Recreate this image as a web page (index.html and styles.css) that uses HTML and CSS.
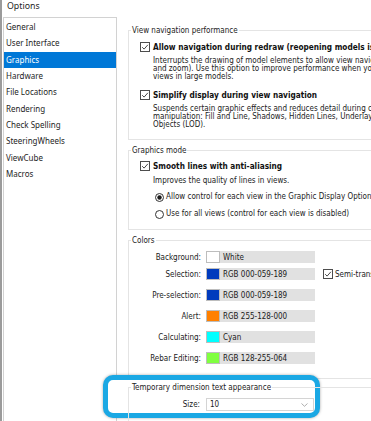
FILE: index.html
```html
<!DOCTYPE html>
<html>
<head>
<meta charset="utf-8">
<title>Options</title>
<link rel="stylesheet" href="styles.css">
</head>
<body>
<div class="window">
  <div class="title">Options</div>
  <div class="main">
    <ul class="nav">
      <li>General</li>
      <li>User Interface</li>
      <li class="sel">Graphics</li>
      <li>Hardware</li>
      <li>File Locations</li>
      <li>Rendering</li>
      <li>Check Spelling</li>
      <li>SteeringWheels</li>
      <li>ViewCube</li>
      <li>Macros</li>
    </ul>
    <div class="content">
      <section class="group g-nav">
        <div class="legend">View navigation performance</div>
        <div class="check-row first">
          <svg class="cb" width="10" height="10" viewBox="0 0 10 10"><rect x="0.5" y="0.5" width="9" height="9" fill="#fff" stroke="#4d4d4d"/><path d="M2.2 5.2 L4.1 7.1 L7.9 2.8" fill="none" stroke="#333" stroke-width="0.9"/></svg>
          <b>Allow navigation during redraw (reopening models is required)</b>
        </div>
        <p class="desc">Interrupts the drawing of model elements to allow view navigation (pan, orbit,<br>and zoom). Use this option to improve performance when you navigate<br>views in large models.</p>
        <div class="check-row second">
          <svg class="cb" width="10" height="10" viewBox="0 0 10 10"><rect x="0.5" y="0.5" width="9" height="9" fill="#fff" stroke="#4d4d4d"/><path d="M2.2 5.2 L4.1 7.1 L7.9 2.8" fill="none" stroke="#333" stroke-width="0.9"/></svg>
          <b>Simplify display during view navigation</b>
        </div>
        <p class="desc">Suspends certain graphic effects and reduces detail during camera<br>manipulation: Fill and Line, Shadows, Hidden Lines, Underlay, and Small<br>Objects (LOD).</p>
      </section>

      <section class="group g-mode">
        <div class="legend">Graphics mode</div>
        <div class="check-row first">
          <svg class="cb" width="10" height="10" viewBox="0 0 10 10"><rect x="0.5" y="0.5" width="9" height="9" fill="#fff" stroke="#4d4d4d"/><path d="M2.2 5.2 L4.1 7.1 L7.9 2.8" fill="none" stroke="#333" stroke-width="0.9"/></svg>
          <b>Smooth lines with anti-aliasing</b>
        </div>
        <p class="desc single">Improves the quality of lines in views.</p>
        <div class="radio-row first">
          <svg class="rb" width="9" height="9" viewBox="0 0 9 9"><circle cx="4.5" cy="4.5" r="4" fill="#fff" stroke="#333"/><circle cx="4.5" cy="4.5" r="2.2" fill="#1a1a1a"/></svg>
          <span>Allow control for each view in the Graphic Display Options dialog</span>
        </div>
        <div class="radio-row">
          <svg class="rb" width="9" height="9" viewBox="0 0 9 9"><circle cx="4.5" cy="4.5" r="4" fill="#fff" stroke="#333"/></svg>
          <span>Use for all views (control for each view is disabled)</span>
        </div>
      </section>

      <section class="group g-colors">
        <div class="legend">Colors</div>
        <div class="color-row r-bg">
          <span class="lbl">Background:</span>
          <span class="field"><span class="swatch" style="background:#ffffff"></span><span class="val">White</span></span>
        </div>
        <div class="color-row r-sel">
          <span class="lbl">Selection:</span>
          <span class="field"><span class="swatch" style="background:#003bbd"></span><span class="val">RGB 000-059-189</span></span>
          <span class="semi">
            <svg class="cb" width="10" height="10" viewBox="0 0 10 10"><rect x="0.5" y="0.5" width="9" height="9" fill="#fff" stroke="#4d4d4d"/><path d="M2.2 5.2 L4.1 7.1 L7.9 2.8" fill="none" stroke="#333" stroke-width="0.9"/></svg>
            <span>Semi-transparent</span>
          </span>
        </div>
        <div class="color-row">
          <span class="lbl">Pre-selection:</span>
          <span class="field"><span class="swatch" style="background:#003bbd"></span><span class="val">RGB 000-059-189</span></span>
        </div>
        <div class="color-row">
          <span class="lbl">Alert:</span>
          <span class="field"><span class="swatch" style="background:#ff8000"></span><span class="val">RGB 255-128-000</span></span>
        </div>
        <div class="color-row">
          <span class="lbl">Calculating:</span>
          <span class="field"><span class="swatch" style="background:#00ffff"></span><span class="val">Cyan</span></span>
        </div>
        <div class="color-row">
          <span class="lbl">Rebar Editing:</span>
          <span class="field"><span class="swatch" style="background:#80ff40"></span><span class="val">RGB 128-255-064</span></span>
        </div>
      </section>

      <section class="group g-temp">
        <div class="legend">Temporary dimension text appearance</div>
        <div class="size-row">
          <span class="lbl">Size:</span>
          <span class="select"><span class="val">10</span>
            <svg class="chev" width="7" height="4" viewBox="0 0 7 4"><path d="M0.5 0.5 L3.5 3.3 L6.5 0.5" fill="none" stroke="#9a9a9a" stroke-width="0.8"/></svg>
          </span>
        </div>
      </section>
    </div>
  </div>
  <div class="highlight"></div>
</div>
</body>
</html>
```

FILE: styles.css
```css
* { box-sizing: border-box; }
html, body { margin: 0; padding: 0; background: #fff; }

.window {
  position: relative;
  width: 371px;
  height: 421px;
  overflow: hidden;
  background: #fff;
  border-left: 2px solid #9b9b9b;
  color: #1a1a1a;
}

.title {
  height: 17px;
  padding-left: 5px;
  font-family: "Noto Sans", "Open Sans", sans-serif;
  font-size: 8.8px;
  line-height: 12px;
  color: #1e1e1e;
}

.main {
  display: flex;
  align-items: flex-start;
}

.nav {
  list-style: none;
  margin: 0 0 0 1px;
  padding: 1px 0 0 0;
  width: 114px;
  height: 420px;
  flex: none;
  border: 1px solid #d2d2d2;
  font-family: "Noto Sans", "Open Sans", sans-serif;
  font-size: 8px;
  color: #1e1e1e;
}
.nav li {
  height: 16.33px;
  line-height: 16.33px;
  padding-left: 2px;
  white-space: nowrap;
}
.nav li.sel {
  background: #0078d7;
  color: #fff;
}

.content {
  flex: none;
  width: 300px;
  margin-left: 11px;
  padding-top: 13px;
  font-family: "DejaVu Sans", sans-serif;
  font-stretch: condensed;
  font-size: 8px;
  white-space: nowrap;
}

.group {
  position: relative;
  border: 1px solid #e4e4e4;
  margin-bottom: 10px;
}
.legend {
  width: fit-content;
  height: 10px;
  line-height: 10px;
  margin: -5px 0 0 2px;
  padding: 0 1px;
  background: #fff;
  color: #222;
}

.check-row, .radio-row {
  display: flex;
  align-items: center;
  height: 10px;
  line-height: 10px;
}
.check-row { padding-left: 11px; gap: 3px; }
.check-row b { font-weight: bold; font-size: 8.2px; color: #111; }
.radio-row { padding-left: 26px; gap: 2px; }
.cb, .rb { flex: none; display: block; }

.desc {
  margin: 5px 0 0 0;
  padding-left: 24px;
  line-height: 8px;
}

.g-nav { padding-bottom: 10px; }
.g-nav .check-row.first { margin-top: 6px; }
.g-nav .check-row.second { margin-top: 9px; }

.g-mode { padding-bottom: 10px; }
.g-mode .check-row.first { margin-top: 5px; }
.g-mode .desc.single { margin-top: 6px; }
.g-mode .radio-row { margin-top: 7px; }

.g-colors { padding-bottom: 14px; }
.color-row {
  display: flex;
  align-items: center;
  height: 12px;
  margin-top: 9px;
}
.color-row.r-bg { margin-top: 5px; }
.color-row.r-sel { margin-top: 5px; }
.lbl {
  width: 72px;
  flex: none;
  text-align: right;
  margin-right: 5px;
}
.field {
  display: flex;
  align-items: center;
  width: 109px;
  height: 12px;
  flex: none;
  background: #e1e1e1;
}
.swatch {
  width: 14px;
  height: 12px;
  flex: none;
  border: 1px solid #bdbdbd;
}
.field .val { margin-left: 3px; }
.semi {
  display: flex;
  align-items: center;
  gap: 2px;
  margin-left: 8px;
}

.g-temp {
  z-index: 2;
  height: 60px;
  margin-top: -2px;
}
.size-row {
  display: flex;
  align-items: center;
  margin-top: 5px;
  height: 13px;
}
.size-row .lbl { width: 71px; margin-right: 6px; }
.select {
  display: flex;
  align-items: center;
  justify-content: space-between;
  width: 108px;
  height: 13px;
  border: 1px solid #d4d4d4;
  background: transparent;
  padding: 0 5px 0 3px;
}
.chev { display: block; }

.highlight {
  position: absolute;
  left: 101px;
  top: 375px;
  width: 217px;
  height: 43px;
  border: 5px solid #1aa8e4;
  border-radius: 10px;
  background: #fff;
  box-shadow: 0 0 3px rgba(0, 0, 0, 0.35);
  z-index: 1;
}
```
